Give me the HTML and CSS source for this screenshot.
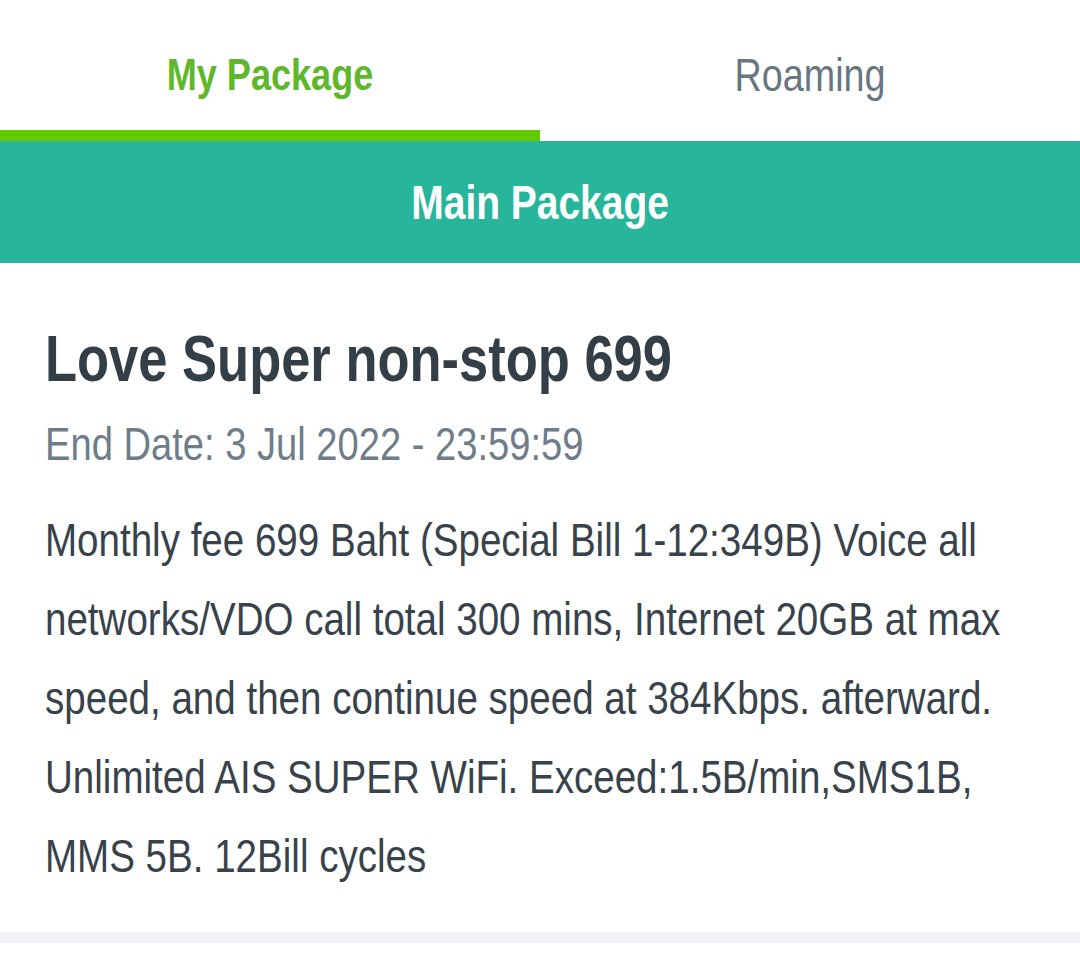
FILE: index.html
```html
<!DOCTYPE html>
<html lang="en">
<head>
<meta charset="utf-8">
<title>My Package</title>
<link rel="stylesheet" href="styles.css">
</head>
<body>
<div class="tabs">
  <div class="tab tab-active"><span class="narrow">My Package</span></div>
  <div class="tab"><span class="narrow">Roaming</span></div>
</div>
<div class="banner"><span class="narrow">Main Package</span></div>
<div class="card">
  <div class="card-body">
    <h1 class="pkg-title">Love Super non-stop 699</h1>
    <p class="pkg-date">End Date: 3 Jul 2022 - 23:59:59</p>
    <p class="pkg-desc">Monthly fee 699 Baht (Special Bill 1-12:349B) Voice all networks/VDO call total 300 mins, Internet 20GB at max speed, and then continue speed at 384Kbps. afterward. Unlimited AIS SUPER WiFi. Exceed:1.5B/min,SMS1B, MMS 5B. 12Bill cycles</p>
  </div>
</div>
<div class="band"></div>
</body>
</html>
```
FILE: styles.css
```css
html, body {
  margin: 0;
  padding: 0;
  background: #ffffff;
}
body {
  font-family: "Liberation Sans", Arial, sans-serif;
  width: 1080px;
  overflow-x: hidden;
}
.narrow {
  display: inline-block;
  transform: scaleX(0.82);
  transform-origin: center center;
  white-space: nowrap;
}
.tabs {
  display: flex;
  height: 141px;
}
.tab {
  flex: 1;
  box-sizing: border-box;
  display: flex;
  align-items: center;
  justify-content: center;
  padding-top: 20px;
  border-bottom: 11px solid transparent;
  font-size: 46px;
  color: #68767f;
}
.tab-active {
  color: #5fb82b;
  font-size: 44px;
  font-weight: bold;
  border-bottom-color: #62cb00;
}
.banner {
  height: 122px;
  background: #27b69b;
  color: #ffffff;
  font-size: 47.5px;
  font-weight: bold;
  display: flex;
  align-items: center;
  justify-content: center;
}
.card {
  padding: 59px 45px 37px 45px;
}
.card-body {
  width: 1207px;
  transform: scaleX(0.82);
  transform-origin: 0 0;
}
.pkg-title {
  margin: 0;
  font-size: 64px;
  line-height: 75px;
  font-weight: bold;
  color: #343e46;
}
.pkg-date {
  margin: 20px 0 0 0;
  font-size: 46.5px;
  line-height: 55px;
  color: #6e7d89;
}
.pkg-desc {
  margin: 28px 0 0 0;
  font-size: 47px;
  line-height: 79px;
  color: #38424b;
}
.band {
  height: 11px;
  background: #f0f2f5;
}
```
